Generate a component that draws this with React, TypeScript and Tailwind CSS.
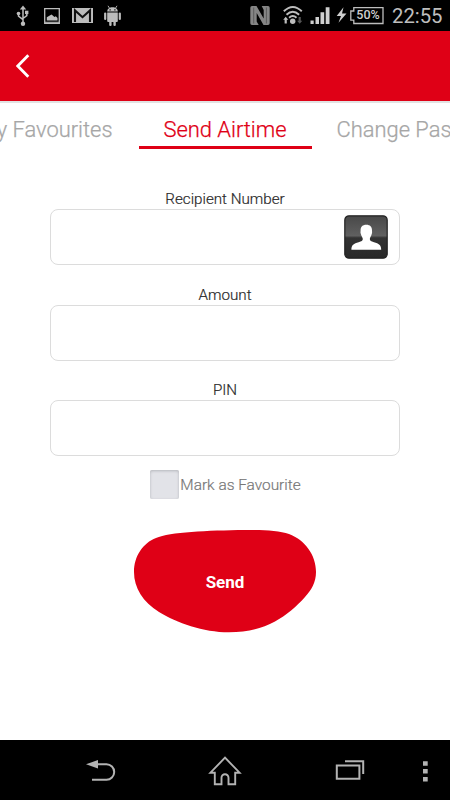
import React, { useState } from 'react';

const StatusBar: React.FC = () => (
  <div className="flex h-[31px] shrink-0 items-center justify-between bg-black pl-4 pr-2 text-[#bdbdbd]">
    <div className="flex items-center">
      {/* USB */}
      <svg className="h-[31px] w-[14px]" viewBox="16 0 14 31" fill="currentColor">
        <path d="M23 5.5l3.2 4h-6.4z" />
        <circle cx="23" cy="23.7" r="2.2" />
        <circle cx="18.5" cy="13.5" r="1.8" />
        <path d="M25 10.7h3.4v3.4H25z" />
        <path d="M23 8v14M18.5 14v2.2l4.5 3.4M26.8 13v2.6L23 18.5" fill="none" stroke="currentColor" strokeWidth="1.5" />
      </svg>
      {/* screenshot */}
      <svg className="ml-[14px] h-[31px] w-4" viewBox="44 0 16 31" fill="currentColor">
        <path d="M44.7 8.7h14.6v14.6H44.7z" fill="none" stroke="currentColor" strokeWidth="1.3" />
        <path d="M46.8 20.5v-3.2l4.7-2.8 3 2.5 1.3-.7 1.7 1.6v2.6z" />
        <path d="M45 21.7h14V24H45z" opacity=".8" />
      </svg>
      {/* mail */}
      <svg className="ml-3 h-[31px] w-[21px]" viewBox="72 0 21 31">
        <path d="M72 8h21v15H72z" fill="currentColor" />
        <path d="M75 22V10.4l7.5 6.8 7.5-6.8V22" fill="none" stroke="#111" strokeWidth="2.1" />
      </svg>
      {/* android */}
      <svg className="ml-[11px] h-[31px] w-[17px]" viewBox="104 0 17 31" fill="currentColor">
        <path d="M107.2 11.6c0-2.8 2.2-4.4 5.3-4.4s5.3 1.6 5.3 4.4z" />
        <path d="M109.5 8.2l-1.5-2.4M115.5 8.2l1.5-2.4" stroke="currentColor" strokeWidth=".9" />
        <path d="M107.2 12.6h10.6V21a1 1 0 0 1-1 1h-8.6a1 1 0 0 1-1-1z" />
        <rect x="104.1" y="12.4" width="2.2" height="7.6" rx="1.1" />
        <rect x="118.7" y="12.4" width="2.2" height="7.6" rx="1.1" />
        <rect x="109.2" y="20" width="2.4" height="6" rx="1.1" />
        <rect x="113.4" y="20" width="2.4" height="6" rx="1.1" />
        <path d="M109.5 9.3h1.2v1.2h-1.2zM114.3 9.3h1.2v1.2h-1.2z" fill="#000" />
      </svg>
    </div>

    <div className="flex items-center">
      {/* NFC */}
      <svg className="h-[31px] w-5" viewBox="250.5 0 20 31" fill="#858585">
        <path d="M252.5 6H257l7.2 12.5V10l-2-4h6.3q1.7 0 1.7 1.7v15.6q0 1.7-1.7 1.7H264l-6.8-12v8.5l2 3.5h-6.7q-1.7 0-1.7-1.7V7.7q0-1.7 1.7-1.7z" />
        <path d="M254.2 7.5v16M266.9 7.5v16" stroke="#333" strokeWidth=".5" />
      </svg>
      {/* wifi */}
      <svg className="ml-[13px] h-[31px] w-5" viewBox="283.5 0 20 31" fill="none" stroke="currentColor">
        <path d="M284.3 11.3q9-8.7 18 0M287 14.8q6.3-6 12.6 0M289.6 17.8q3.7-3.5 7.4 0" strokeWidth="1.9" />
        <circle cx="293.2" cy="21.2" r="2.7" fill="currentColor" stroke="none" />
        <path d="M286.2 16.8l2.6 3h-1.5v3.8h-2.2v-3.8h-1.4z" fill="currentColor" stroke="none" />
        <path d="M300.2 23.8l2.6-3h-1.5V17h-2.2v3.8h-1.5z" fill="#555" stroke="none" />
      </svg>
      {/* signal */}
      <svg className="ml-[7px] h-[31px] w-5" viewBox="310.5 0 20 31" fill="#cfcfcf">
        <path d="M311 20.5h3.2V24H311zM316 17h3.5v7H316zM321 12.3h3.7V24H321zM326.2 7.3h3.8V24h-3.8z" />
      </svg>
      {/* battery */}
      <svg className="ml-[6px] h-[31px] w-[11px]" viewBox="336.5 0 11 31" fill="#cfcfcf">
        <path d="M344 7.3l-6.8 8.8h4.3l-2.5 6.6 8-9.2h-4.5z" />
      </svg>
      <div className="relative ml-[3px] h-[31px] w-[34px]">
        <svg className="h-[31px] w-[34px]" viewBox="350.5 0 34 31" fill="none" stroke="currentColor" strokeWidth="1.3">
          <path d="M354.3 7.6h29.2v15.9h-29.2v-3.3h-3V11h3z" />
        </svg>
        <span className="absolute inset-0 flex items-center justify-center pl-[2px] text-[12.5px] font-medium text-[#cfcfcf]">
          50%
        </span>
      </div>
      <span className="ml-2 mt-[1px] w-[50px] text-[20.3px] leading-none text-[#bebebe]">22:55</span>
    </div>
  </div>
);

const Field: React.FC<{ label: string; children?: React.ReactNode }> = ({ label, children }) => {
  const [value, setValue] = useState('');
  return (
    <label className="flex w-[350px] flex-col items-center">
      <span className="h-5 text-[15.2px] leading-[21px] font-light text-[#2a2a2a] [-webkit-text-stroke:0.2px]">{label}</span>
      <span className="flex h-14 w-full items-center rounded-lg border border-[#dcdcdc] bg-white pr-[11px]">
        <input
          className="h-full min-w-0 flex-1 bg-transparent px-3 outline-none"
          value={value}
          onChange={(e) => setValue(e.target.value)}
        />
        {children}
      </span>
    </label>
  );
};

const ContactIcon: React.FC = () => (
  <svg className="h-[44px] w-[44px]" viewBox="0 0 44 44">
    <defs>
      <linearGradient id="contact" x1="0" y1="0" x2="0" y2="1">
        <stop offset="0" stopColor="#484848" />
        <stop offset=".47" stopColor="#606060" />
        <stop offset=".52" stopColor="#333" />
        <stop offset="1" stopColor="#292929" />
      </linearGradient>
    </defs>
    <rect x=".8" y=".8" width="42.4" height="42.4" rx="4.2" fill="url(#contact)" stroke="#222" strokeWidth="1.2" />
    <path
      d="M22.3 9.8c3.8 0 5.7 2.1 5.7 5.4 0 1.6.3 2.2-.2 3.5-.5 2.6-2 3.8-2 5.3 0 1.7 1.2 2.3 4.2 3.2 4.8 1.3 7.2 2.6 7.2 7.5H7.4c0-4.9 2.4-6.2 7.2-7.5 3-.9 4.2-1.5 4.2-3.2 0-1.5-1.5-2.7-2-5.3-.5-1.3-.2-1.9-.2-3.5 0-3.3 1.9-5.4 5.7-5.4z"
      fill="#fff"
    />
  </svg>
);

const NavBar: React.FC = () => (
  <div className="flex h-[60px] shrink-0 items-center bg-black pl-[85px] text-[#b3b3b3]">
    <svg className="h-[60px] w-[31px]" viewBox="85 740 31 60" fill="none" stroke="currentColor" strokeWidth="2">
      <path d="M97 764.3h9.5a7.6 7.6 0 0 1 0 15.4H92" />
      <path d="M86 764.3l12-4.3v8.4z" fill="currentColor" stroke="none" />
    </svg>
    <svg className="ml-[92px] h-[60px] w-[34px]" viewBox="208 740 34 60" fill="none" stroke="currentColor" strokeWidth="1.9">
      <path d="M225 757.7l-14.6 15h4.4v11.5h6.7v-6.5a3.5 3.5 0 0 1 7 0v6.5h6.7v-11.5h4.4z" />
    </svg>
    <svg className="ml-[93px] h-[60px] w-[31px]" viewBox="335 740 31 60" fill="none" stroke="currentColor" strokeWidth="2">
      <path d="M336.8 765.5h22.6v13.2h-22.6z" />
      <path d="M345 761.3h18.2V774" />
    </svg>
    <svg className="ml-[55px] h-[60px] w-2" viewBox="421 740 8 60" fill="currentColor">
      <path d="M423 761.2h4.7v4.6H423zM423 769h4.7v4.6H423zM423 777h4.7v4.6H423z" />
    </svg>
  </div>
);

export default function App() {
  const [favourite, setFavourite] = useState(false);

  return (
    <div className="flex h-[800px] w-[450px] flex-col overflow-hidden bg-white font-[Roboto,sans-serif]">
      <StatusBar />

      <header className="flex h-[72px] shrink-0 items-center border-b-2 border-[#e2e2e2] bg-[#df0016] pl-4">
        <button aria-label="Back">
          <svg className="h-6 w-[14px]" viewBox="0 0 14 24" fill="none" stroke="#fff" strokeWidth="2.8">
            <path d="M12.3 1.3L1.8 12l10.5 10.7" />
          </svg>
        </button>
      </header>

      <nav className="flex h-[47px] shrink-0 text-[21.9px] font-light whitespace-nowrap text-[#a6a6a6] [-webkit-text-stroke:0.25px]">
        <div className="flex w-[138.5px] shrink-0 justify-end pt-[10px] pr-[26px] leading-[34px]">My Favourites</div>
        <div className="h-[46px] w-[173px] shrink-0 border-b-[3px] border-[#df0016] pt-[10px] text-center leading-[34px] text-[#df0016]">
          Send Airtime
        </div>
        <div className="min-w-0 flex-1 overflow-hidden pt-[10px] pl-[25px] leading-[34px]">Change Password</div>
      </nav>

      <main className="flex flex-1 flex-col items-center pt-[39px]">
        <div className="flex flex-col gap-[19.5px]">
          <Field label="Recipient Number">
            <ContactIcon />
          </Field>
          <Field label="Amount" />
          <Field label="PIN" />
        </div>

        <label className="mt-[14px] flex items-center gap-[1px] pl-[1px] text-[15.4px] font-light text-[#777] [-webkit-text-stroke:0.2px]">
          <input
            type="checkbox"
            className="h-[29px] w-[29px] appearance-none rounded-[2px] bg-[#e2e3e8] shadow-[inset_0_1px_3px_#b4b6bb] checked:bg-[#df0016]"
            checked={favourite}
            onChange={(e) => setFavourite(e.target.checked)}
          />
          <span className="pt-[3px]">Mark as Favourite</span>
        </label>

        <button className="mt-[30px] grid h-[104px] w-[184px] place-items-center">
          <svg className="col-start-1 row-start-1 h-[104px] w-[184px]" viewBox="133 529 184 104" fill="#df0016">
            <path d="M134 572C134 556 143 543 156 538C170 532 207 530.5 245 530C263 529.8 279 530.5 289 534C305 540 316 555 316 572C316 582 311.5 590 305 597C297 606 286 615.5 275 621.5C261 629 246 632.3 229 632.3C203 632.3 177 623 159 612C143 602 134 588 134 572Z" />
          </svg>
          <span className="col-start-1 row-start-1 pt-[3px] text-[17px] font-bold text-white">Send</span>
        </button>
      </main>

      <NavBar />
    </div>
  );
}
